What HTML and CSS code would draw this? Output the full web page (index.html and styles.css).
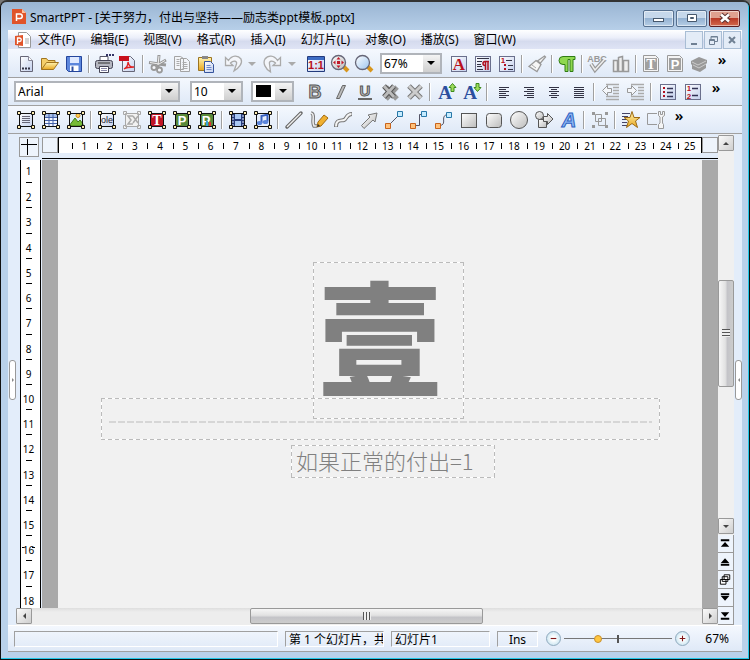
FILE: index.html
```
<!DOCTYPE html>
<html lang="zh-CN">
<head>
    <meta charset="UTF-8">
    <meta name="viewport" content="width=device-width, initial-scale=1.0">
    <title>SmartPPT</title>
    <link rel="stylesheet" href="styles.css">
</head>
<body>
    <!-- Shared icon parts -->
    <svg class="defs" aria-hidden="true">
        <defs>
            <linearGradient id="metal" x1="0" y1="0" x2="1" y2="1"><stop offset="0" stop-color="#fff"/><stop offset="1" stop-color="#bbb"/></linearGradient>
            <linearGradient id="sheet" x1="0" y1="0" x2="1" y2="1"><stop offset="0" stop-color="#fff"/><stop offset="1" stop-color="#c3d0ee"/></linearGradient>
            <linearGradient id="gold" x1="0" y1="0" x2="0" y2="1"><stop offset="0" stop-color="#fff3b0"/><stop offset="1" stop-color="#e9a820"/></linearGradient>
            <linearGradient id="sky" x1="0" y1="0" x2="1" y2="1"><stop offset="0" stop-color="#fff"/><stop offset="1" stop-color="#9cc4ee"/></linearGradient>
            <symbol id="frame" viewBox="0 0 20 20">
                <path d="M3.500 3.500h13v13h-13z" fill="none" stroke="#111"/>
                <path d="M1.500 1.500h3v3h-3zM15.500 1.500h3v3h-3zM1.500 15.500h3v3h-3zM15.500 15.500h3v3h-3z" fill="#ffedb0" stroke="#111"/>
            </symbol>
            <symbol id="page" viewBox="0 0 20 20">
                <rect x="2.500" y="2.500" width="15" height="15" fill="url(#sheet)" stroke="#6a6f8c"/>
            </symbol>
            <symbol id="logo" viewBox="0 0 16 16">
                <path d="M1 1h10l4 4v11H1z" fill="#e0542a"/>
                <path d="M11 1v4h4z" fill="#ffc2a0"/>
                <path d="M5.500 13V6h3.500a2.200 2.200 0 0 1 0 4.500H6" fill="none" stroke="#fff" stroke-width="1.500"/>
            </symbol>
        </defs>
    </svg>

    <div class="window">
        <header class="titlebar">
            <svg class="app-icon" viewBox="0 0 16 16"><use href="#logo"/></svg>
            <h1 class="title">SmartPPT - [关于努力，付出与坚持——励志类ppt模板.pptx]</h1>
            <div class="window-buttons">
                <button class="win-btn" aria-label="最小化"><svg viewBox="0 0 30 16"><rect x="9.500" y="8.500" width="10" height="3" fill="#fff" stroke="#46586d"/></svg></button>
                <button class="win-btn" aria-label="最大化"><svg viewBox="0 0 30 16"><path d="M10.500 4.500h9v7h-9z" fill="#fff" stroke="#46586d"/><path d="M13.500 7.500h3v1h-3z" fill="#9ab5d3" stroke="#46586d"/></svg></button>
                <button class="win-btn close" aria-label="关闭"><svg viewBox="0 0 30 16"><path d="M11 4.500l8 7M19 4.500l-8 7" stroke="#5a3030" stroke-width="4.500"/><path d="M11 4.500l8 7M19 4.500l-8 7" stroke="#fff" stroke-width="2.500"/></svg></button>
            </div>
        </header>

        <nav class="menubar">
            <svg class="doc-icon" viewBox="0 0 16 16"><path d="M3.500.5h8l4 4v11h-12z" fill="#fff" stroke="#999"/><path d="M10 7h4M10 9h4M10 11h4" stroke="#aaa"/><path d="M0 4l8-1v11l-8-1z" fill="#e0542a"/><path d="M2.500 12V6h2a1.500 1.500 0 0 1 0 3.500H3" fill="none" stroke="#fff" stroke-width="1.300"/></svg>
            <button class="menu">文件(F)</button>
            <button class="menu">编辑(E)</button>
            <button class="menu">视图(V)</button>
            <button class="menu">格式(R)</button>
            <button class="menu">插入(I)</button>
            <button class="menu">幻灯片(L)</button>
            <button class="menu">对象(O)</button>
            <button class="menu">播放(S)</button>
            <button class="menu">窗口(W)</button>
            <div class="doc-buttons">
                <button class="doc-btn" aria-label="最小化文档"><svg viewBox="0 0 16 16"><path d="M5 12h6" stroke="#6f8093" stroke-width="2"/></svg></button>
                <button class="doc-btn" aria-label="还原文档"><svg viewBox="0 0 16 16"><path d="M6 7V4.500h6.500v5H10M6 5h6M4.500 7.500h5v5h-5zM4.500 8.500h5" fill="none" stroke="#6f8093"/></svg></button>
                <button class="doc-btn" aria-label="关闭文档"><svg viewBox="0 0 16 16"><path d="M5 5l6 6M11 5l-6 6" stroke="#6f8093" stroke-width="2"/></svg></button>
            </div>
        </nav>

        <div class="toolbar" role="toolbar" aria-label="标准">
            <button class="tool" aria-label="新建"><svg viewBox="0 0 20 20"><path d="M4.500 2.500h8l4 4v11h-12z" fill="url(#sheet)" stroke="#667"/><path d="M12.500 2.500v4h4" fill="#fff" stroke="#889"/><path d="M6 14.500h2M9 14.500h2M12 14.500h2" stroke="#334" stroke-width="2"/></svg></button>
            <button class="tool" aria-label="打开"><svg viewBox="0 0 20 20"><path d="M1.500 15.500v-11h5l1.500 2h7v3" fill="#f5cf6a" stroke="#a07420"/><path d="M1.500 15.500l5-7h12l-5 7z" fill="url(#gold)" stroke="#a07420"/></svg></button>
            <button class="tool" aria-label="保存"><svg viewBox="0 0 20 20"><path d="M2.500 2.500h15v15h-13l-2-2z" fill="#5c86dc" stroke="#24459c"/><path d="M6 3h9v6H6z" fill="#dfe9ff"/><path d="M6 11.500h8.500V17H6z" fill="#fff"/><path d="M7.500 12.500h2V17h-2z" fill="#2c4d9e"/></svg></button>
            <span class="sep"></span>
            <button class="tool" aria-label="打印"><svg viewBox="0 0 20 20"><path d="M6 7V2.500h8V7" fill="#fff" stroke="#556"/><rect x="1.500" y="6.500" width="17" height="8" rx="2" fill="#b4b6c0" stroke="#445"/><path d="M4 9h12" stroke="#333"/><path d="M5.500 12.500h9v6h-9z" fill="#fff" stroke="#445"/><path d="M7 14.500h6M7 16.500h6" stroke="#88a"/><path d="M12 1h2M15 1h2M18 1h2" stroke="#336" stroke-width="2"/></svg></button>
            <button class="tool" aria-label="导出 PDF"><svg viewBox="0 0 20 20"><path d="M4.500 2.500h8l4 4v11h-12z" fill="url(#sheet)" stroke="#667"/><path d="M1 2h10v5H1z" fill="#c8101c"/><path d="M6 15c4-2 4-5 4-7 1 4 2 5 6 5-4 0-7 0-10 2z" fill="none" stroke="#e02020" stroke-width="1.300"/></svg></button>
            <span class="sep"></span>
            <button class="tool" aria-label="剪切" disabled><svg viewBox="0 0 20 20"><path d="M1 8.500l10 1.500 7-4M11 1l-1 12M10 10l8 1" stroke="#999" stroke-width="3" fill="none"/><path d="M2 8.500l9 1.500 6-3.500M11 2l-1 9" stroke="#eee" fill="none"/><circle cx="6" cy="13.500" r="2.500" fill="#f4f6fa" stroke="#999" stroke-width="1.800"/><circle cx="11.500" cy="16" r="2.500" fill="#f4f6fa" stroke="#999" stroke-width="1.800"/></svg></button>
            <button class="tool" aria-label="复制" disabled><svg viewBox="0 0 20 20"><path d="M2.500 2.500h6l3 2v11h-9zM8.500 4.500h6l3 3v10h-9z" fill="#f2f4f8" stroke="#a3a3a3"/><path d="M10.500 8.500h4M10.500 10.500h5M10.500 12.500h5M10.500 14.500h5M4.500 5.500h3M4.500 7.500h3M4.500 9.500h3M4.500 11.500h3" stroke="#aaa"/></svg></button>
            <button class="tool" aria-label="粘贴"><svg viewBox="0 0 20 20"><path d="M2.500 3.500h13v13h-13z" fill="url(#gold)" stroke="#9c7420"/><path d="M6 2h6v3H6z" fill="#888"/><path d="M8.500 7.500h6l3 3v8h-9z" fill="url(#sheet)" stroke="#36549c"/><path d="M10.500 11.500h4M10.500 13.500h5M10.500 15.500h5" stroke="#6d87c8"/></svg></button>
            <button class="tool split" aria-label="撤销" disabled><svg viewBox="0 0 20 20"><path d="M2.500 3.500v8h7.500l-2.500-2.500c3-3 7-2 6 1l-2.500 7c5-3 9-8 7-12-3-4-9-4-12.500 1.500z" fill="#f4f6fa" stroke="#aaa" stroke-width="1.300"/></svg><span class="arrow"></span></button>
            <button class="tool split" aria-label="重做" disabled><svg viewBox="0 0 20 20"><path d="M17.500 3.500v8h-7.500l2.500-2.500c-3-3-7-2-6 1l1 8c-5-3-8-9-5.500-13 3-4 9-4 12.500 1.500z" fill="#f4f6fa" stroke="#aaa" stroke-width="1.300"/></svg><span class="arrow"></span></button>
            <span class="sep blank"></span>
            <button class="tool" aria-label="实际大小"><svg viewBox="0 0 20 20"><path d="M1.500 2.500h17v15h-17z" fill="url(#sheet)" stroke="#223a7c"/><path d="M2 3h16v3H2z" fill="#3d6cc4"/><text class="t-red" x="10" y="15" font-size="11">1:1</text></svg></button>
            <button class="tool" aria-label="整页显示"><svg viewBox="0 0 20 20"><path d="M13 12l5 5" stroke="#d8961c" stroke-width="4"/><circle cx="8.500" cy="8.500" r="7" fill="url(#metal)" stroke="#667" stroke-width="1.300"/><path d="M8.500 3l2 2.500h-4zM8.500 14l2-2.500h-4zM3 8.500l2.500-2v4zM14 8.500l-2.500-2v4zM7 7h3v3H7z" fill="#c01828"/></svg></button>
            <button class="tool" aria-label="缩放"><svg viewBox="0 0 20 20"><path d="M13 12l5 5" stroke="#d8961c" stroke-width="4"/><circle cx="8.500" cy="8.500" r="7" fill="url(#sky)" stroke="#667" stroke-width="1.300"/></svg></button>
            <span class="combo combo-zoom"><select aria-label="显示比例"><option>67%</option><option>100%</option></select></span>
            <button class="tool" aria-label="字符"><svg viewBox="0 0 20 20"><use href="#page"/><text class="t-red t-serif" x="10" y="16" font-size="17">A</text></svg></button>
            <button class="tool" aria-label="段落"><svg viewBox="0 0 20 20"><use href="#page"/><path d="M4 4.500h12M4 7.500h5M4 10.500h4M4 12.500h5M4 15.500h6" stroke="#334"/><path d="M16 7.500h-4a2 2 0 0 0 0 4M12.500 8v8M15 8v8" fill="none" stroke="#b01020" stroke-width="1.500"/></svg></button>
            <button class="tool" aria-label="项目"><svg viewBox="0 0 20 20"><use href="#page"/><text class="t-red" x="6" y="9" font-size="8">1</text><path d="M7 10h2v2H7zM7 14h2v2H7z" fill="#b01020"/><path d="M9 6.500h6M11 11.500h5M11 15.500h5" stroke="#334"/></svg></button>
            <span class="sep"></span>
            <button class="tool" aria-label="格式刷"><svg viewBox="0 0 20 20"><path d="M17.500 2l1 1-5 6-3-2zM9 6.500l5 4-4 7-8-5z" fill="#f6f6f6" stroke="#999" stroke-width="1.300"/><path d="M5 11l4 3" stroke="#aaa"/></svg></button>
            <span class="sep"></span>
            <button class="tool" aria-label="段落标记"><svg viewBox="0 0 20 20"><path d="M6 2.500h12v3h-2v12h-3v-12h-2v12H8v-7H6a4 4 0 0 1 0-8z" fill="#8fd850" stroke="#2f7c14"/></svg></button>
            <span class="sep"></span>
            <button class="tool" aria-label="拼写检查" disabled><svg viewBox="0 0 20 20"><text class="t-gray" x="10" y="8" font-size="9">ABC</text><path d="M4 10l4 6 9-10" fill="none" stroke="#999" stroke-width="4"/><path d="M4 10l4 6 9-10" fill="none" stroke="#eee" stroke-width="1.500"/></svg></button>
            <button class="tool" aria-label="词库" disabled><svg viewBox="0 0 20 20"><path d="M2.500 6.500h4v11h-4zM7.500 3.500l4-1v15h-4zM12.500 6.500h5v11h-5z" fill="#eee" stroke="#999" stroke-width="1.500"/></svg></button>
            <span class="sep"></span>
            <button class="tool" aria-label="文本字段" disabled><svg viewBox="0 0 20 20"><path d="M2.500 1.500h12l3 3v13h-15z" fill="#f4f4f4" stroke="#999"/><path d="M4 4h12v12H4z" fill="#a0a0a0"/><text class="t-white t-serif" x="10" y="15" font-size="14">T</text></svg></button>
            <button class="tool" aria-label="演示字段" disabled><svg viewBox="0 0 20 20"><path d="M2.500 1.500h12l3 3v13h-15z" fill="#f4f4f4" stroke="#999"/><path d="M4 4h12v12H4z" fill="#a0a0a0"/><text class="t-white" x="10" y="15" font-size="13">P</text></svg></button>
            <button class="tool" aria-label="对象库" disabled><svg viewBox="0 0 20 20"><path d="M2 7l8-4 8 3v3l-1 1v4l-6 4-8-3v-4l-1-1z" fill="#999"/><path d="M3 8l6 3 8-4M4 11l6 3 7-4" fill="none" stroke="#ccc"/></svg></button>
            <button class="more" aria-label="更多标准工具">»</button>
        </div>

        <div class="toolbar toolbar-format" role="toolbar" aria-label="格式">
            <span class="combo combo-font"><select aria-label="字体"><option>Arial</option></select></span>
            <span class="combo combo-size"><select aria-label="字号"><option>10</option><option>12</option></select></span>
            <span class="combo combo-color"><select aria-label="字体颜色"><option value="#000000"></option></select></span>
            <button class="tool" aria-label="加粗"><svg viewBox="0 0 20 20"><text class="t-face" x="10" y="16" font-size="18">B</text></svg></button>
            <button class="tool" aria-label="倾斜"><svg viewBox="0 0 20 20"><path d="M12.500 3.500h3l-6 13h-3z" fill="#bbb" stroke="#666"/></svg></button>
            <button class="tool" aria-label="下划线"><svg viewBox="0 0 20 20"><text class="t-face" x="10" y="14" font-size="15">U</text><path d="M3 17h14" stroke="#666" stroke-width="2"/></svg></button>
            <button class="tool" aria-label="阴影"><svg viewBox="0 0 20 20"><path d="M6 5l11 12M17 5L6 17" stroke="#999" stroke-width="5"/><path d="M4 4l10 11M14 4L4 15" stroke="#555" stroke-width="5"/><path d="M4 4l10 11M14 4L4 15" stroke="#bbb" stroke-width="3"/></svg></button>
            <button class="tool" aria-label="清除格式"><svg viewBox="0 0 20 20"><path d="M4 4l12 12M16 4L4 16" stroke="#777" stroke-width="5"/><path d="M4 4l12 12M16 4L4 16" stroke="#ccc" stroke-width="3"/></svg></button>
            <span class="sep"></span>
            <button class="tool" aria-label="增大字号"><svg viewBox="0 0 20 20"><text class="t-blue t-serif" x="8" y="17" font-size="19">A</text><path d="M15.500 1.500l3.500 4h-2v4h-3v-4h-2z" fill="#9fdc5c" stroke="#3d8a1c"/></svg></button>
            <button class="tool" aria-label="减小字号"><svg viewBox="0 0 20 20"><text class="t-blue t-serif" x="8" y="17" font-size="19">A</text><path d="M15.500 9.500l3.500-4h-2v-4h-3v4h-2z" fill="#9fdc5c" stroke="#3d8a1c"/></svg></button>
            <span class="sep"></span>
            <button class="tool" aria-label="左对齐"><svg viewBox="0 0 20 20"><path d="M5 5.500h10M5 7.500h7M5 9.500h10M5 11.500h7M5 13.500h10M5 15.500h7" stroke="#334"/></svg></button>
            <button class="tool" aria-label="右对齐"><svg viewBox="0 0 20 20"><path d="M5 5.500h10M8 7.500h7M5 9.500h10M8 11.500h7M5 13.500h10M8 15.500h7" stroke="#334"/></svg></button>
            <button class="tool" aria-label="居中"><svg viewBox="0 0 20 20"><path d="M5 5.500h10M7 7.500h6M5 9.500h10M7 11.500h6M5 13.500h10M7 15.500h6" stroke="#334"/></svg></button>
            <button class="tool" aria-label="两端对齐"><svg viewBox="0 0 20 20"><path d="M5 5.500h10M5 7.500h10M5 9.500h10M5 11.500h10M5 13.500h10M5 15.500h10" stroke="#334"/></svg></button>
            <span class="sep"></span>
            <button class="tool" aria-label="减少缩进" disabled><svg viewBox="0 0 20 20"><path d="M5 2.500h13M12 5.500h6M12 8.500h6M12 11.500h6M5 14.500h13M5 17.500h13" stroke="#aaa" stroke-width="1.500"/><path d="M1.500 8.500l5-5v3h4v4h-4v3z" fill="#f4f6fa" stroke="#999"/></svg></button>
            <button class="tool" aria-label="增加缩进" disabled><svg viewBox="0 0 20 20"><path d="M5 2.500h13M12 5.500h6M12 8.500h6M12 11.500h6M5 14.500h13M5 17.500h13" stroke="#aaa" stroke-width="1.500"/><path d="M10.500 8.500l-5-5v3h-4v4h4v3z" fill="#f4f6fa" stroke="#999"/></svg></button>
            <span class="sep"></span>
            <button class="tool" aria-label="项目符号"><svg viewBox="0 0 20 20"><use href="#page"/><path d="M5 5h2v2H5zM5 9h2v2H5zM5 13h2v2H5z" fill="#b01020"/><path d="M9 6.500h6M9 10.500h6M9 14.500h6" stroke="#335" stroke-width="1.500"/></svg></button>
            <button class="tool" aria-label="编号"><svg viewBox="0 0 20 20"><use href="#page"/><text class="t-red" x="6" y="9" font-size="8">1</text><text class="t-red" x="6" y="17" font-size="8">2</text><path d="M9 6.500h6M9 13.500h6" stroke="#335" stroke-width="1.500"/></svg></button>
            <button class="more" aria-label="更多格式工具">»</button>
        </div>

        <div class="toolbar toolbar-object" role="toolbar" aria-label="对象">
            <button class="tool" aria-label="文本框"><svg viewBox="0 0 20 20"><rect x="3" y="3" width="14" height="14" fill="url(#sheet)"/><path d="M6 6.500h8M6 8.500h8M6 10.500h8M6 12.500h8" stroke="#667"/><use href="#frame"/></svg></button>
            <button class="tool" aria-label="表格"><svg viewBox="0 0 20 20"><rect x="3" y="3" width="14" height="14" fill="#f2f6ff"/><path d="M4 4h12v3H4z" fill="#a8bfe8"/><path d="M4 7.500h12M4 10.500h12M4 13.500h12M8 4v12M12 4v12" stroke="#4562a8"/><use href="#frame"/></svg></button>
            <button class="tool" aria-label="图片"><svg viewBox="0 0 20 20"><rect x="3" y="3" width="14" height="14" fill="#dff0fb"/><path d="M3 16l6-8 3 4 2-2 3 4v2z" fill="#76bb38" stroke="#3c7c18"/><circle cx="12" cy="5.500" r="2" fill="#ffd050" stroke="#d08a20"/><use href="#frame"/></svg></button>
            <span class="sep"></span>
            <button class="tool" aria-label="OLE 对象"><svg viewBox="0 0 20 20"><rect x="3" y="3" width="14" height="14" fill="url(#sheet)"/><text class="t-dark" x="10" y="13" font-size="9">ole</text><use href="#frame"/></svg></button>
            <button class="tool" aria-label="公式" disabled><svg viewBox="0 0 20 20"><path d="M3.500 3.500h13v13h-13zM1.500 1.500h3v3h-3zM15.500 1.500h3v3h-3zM1.500 15.500h3v3h-3zM15.500 15.500h3v3h-3z" fill="#f2f2f2" stroke="#a8a8a8"/><path d="M11 6H6l3 4-3 4h5M11 6l5 7M16 6l-5 7" fill="none" stroke="#aaa" stroke-width="1.500"/></svg></button>
            <button class="tool" aria-label="TextMaker 对象"><svg viewBox="0 0 20 20"><rect x="3" y="3" width="14" height="14" fill="#c01424"/><text class="t-white t-serif" x="10" y="15" font-size="14">T</text><use href="#frame"/></svg></button>
            <button class="tool" aria-label="PlanMaker 对象"><svg viewBox="0 0 20 20"><rect x="3" y="3" width="14" height="14" fill="#5a8a3a"/><text class="t-white" x="10" y="15" font-size="13">P</text><use href="#frame"/></svg></button>
            <button class="tool" aria-label="图表"><svg viewBox="0 0 20 20"><rect x="3" y="3" width="14" height="14" fill="#5a8a3a"/><text class="t-white" x="9" y="15" font-size="13">P</text><path d="M9 11h2v5H9z" fill="#38a0e0"/><path d="M12 12h2v4h-2z" fill="#e03030"/><use href="#frame"/></svg></button>
            <span class="sep"></span>
            <button class="tool" aria-label="影片"><svg viewBox="0 0 20 20"><rect x="3" y="3" width="14" height="14" fill="#263a78"/><path d="M7 4h6v5H7zM7 11h6v5H7z" fill="#a9c8f4"/><path d="M5 5v11M15 5v11" stroke="#dfe8ff" stroke-dasharray="2 1"/><use href="#frame"/></svg></button>
            <button class="tool" aria-label="声音"><svg viewBox="0 0 20 20"><rect x="3" y="3" width="14" height="14" fill="#e6eefc"/><path d="M8.500 13V6l6-1.500v7" fill="none" stroke="#3860c0" stroke-width="2"/><ellipse cx="6.500" cy="13" rx="2.800" ry="2" fill="#5a85dc"/><ellipse cx="12.500" cy="12" rx="2.800" ry="2" fill="#5a85dc"/><use href="#frame"/></svg></button>
            <span class="sep"></span>
            <button class="tool" aria-label="直线"><svg viewBox="0 0 20 20"><path d="M3 17L17 3" stroke="#666" stroke-width="3.500" stroke-linecap="round"/><path d="M3 17L17 3" stroke="#eee" stroke-width="1.500"/></svg></button>
            <button class="tool" aria-label="手绘"><svg viewBox="0 0 20 20"><path d="M2 3c5 1 0 8 3 13h3" fill="none" stroke="#777" stroke-width="3.500"/><path d="M2 3c5 1 0 8 3 13h3" fill="none" stroke="#eee" stroke-width="1.500"/><path d="M8 17l1-5 6-7 4 3-7 8z" fill="#f0b030" stroke="#a06a10"/><path d="M8 17l1-3 2 2z" fill="#333"/></svg></button>
            <button class="tool" aria-label="曲线"><svg viewBox="0 0 20 20"><path d="M2 17c0-8 5-6 8-7s2-6 8-6" fill="none" stroke="#777" stroke-width="4"/><path d="M2 16.500c0-7.500 5-5.500 8-6.500s2-6 7.500-6" fill="none" stroke="#f4f4f4" stroke-width="2"/></svg></button>
            <button class="tool" aria-label="箭头"><svg viewBox="0 0 20 20"><path d="M2.500 15.500l8.500-8.500-2-2 9-2-2 9-2-2-9 8.500z" fill="url(#metal)" stroke="#777"/></svg></button>
            <button class="tool" aria-label="直线连接符"><svg viewBox="0 0 20 20"><path d="M5 15L15 5" stroke="#556"/><path d="M1.500 13.500h5v5h-5z" fill="#ffc27c" stroke="#c8641c"/><path d="M13.500 1.500h5v5h-5z" fill="#c6ecff" stroke="#2878a8"/></svg></button>
            <button class="tool" aria-label="折线连接符"><svg viewBox="0 0 20 20"><path d="M5 15.500h5.500v-11H15" fill="none" stroke="#556"/><path d="M1.500 13.500h5v5h-5z" fill="#ffc27c" stroke="#c8641c"/><path d="M12.500 1.500h5v5h-5z" fill="#c6ecff" stroke="#2878a8"/></svg></button>
            <button class="tool" aria-label="曲线连接符"><svg viewBox="0 0 20 20"><path d="M5 15.500c10 0-1-11 10-11" fill="none" stroke="#556"/><path d="M1.500 13.500h5v5h-5z" fill="#ffc27c" stroke="#c8641c"/><path d="M12.500 2.500h5v5h-5z" fill="#c6ecff" stroke="#2878a8"/></svg></button>
            <button class="tool" aria-label="矩形"><svg viewBox="0 0 20 20"><rect x="2.500" y="3.500" width="15" height="14" fill="url(#metal)" stroke="#555"/></svg></button>
            <button class="tool" aria-label="圆角矩形"><svg viewBox="0 0 20 20"><rect x="2.500" y="3.500" width="15" height="14" rx="3" fill="url(#metal)" stroke="#555"/></svg></button>
            <button class="tool" aria-label="椭圆"><svg viewBox="0 0 20 20"><circle cx="10" cy="10" r="8.500" fill="url(#metal)" stroke="#555"/></svg></button>
            <button class="tool" aria-label="自选图形"><svg viewBox="0 0 20 20"><path d="M4.500 9.500h8v8h-8z" fill="url(#metal)" stroke="#555"/><circle cx="5.500" cy="5.500" r="4" fill="url(#metal)" stroke="#555"/><path d="M9.500 6.500h4v-3l5.500 5.500-5.500 5.500v-3h-4z" fill="url(#metal)" stroke="#555"/></svg></button>
            <button class="tool" aria-label="艺术字"><svg viewBox="0 0 20 20"><text class="t-art" x="10" y="17" font-size="20">A</text></svg></button>
            <span class="sep"></span>
            <button class="tool" aria-label="组合" disabled><svg viewBox="0 0 20 20"><path d="M5.500 4.500h6v7h-6zM8.500 8.500h7v7h-7z" fill="none" stroke="#999"/><path d="M2 2h3v3H2zM15 2h3v3h-3zM2 15h3v3H2zM15 15h3v3h-3z" fill="#999"/></svg></button>
            <span class="sep"></span>
            <button class="tool" aria-label="动画"><svg viewBox="0 0 20 20"><path d="M1 3.500h8M1 6.500h6M1 9.500h5M1 12.500h5M1 15.500h5" stroke="#446"/><path d="M11 1.500l2 6h6l-4.500 3.500 2 6.500-5.500-4-5.500 4 2-6.500L3 7.500h6z" fill="url(#gold)" stroke="#9c6a14"/></svg></button>
            <button class="tool" aria-label="对象属性" disabled><svg viewBox="0 0 20 20"><path d="M11 3.500H1.500v11H11" fill="none" stroke="#999"/><path d="M12.500 1.500v4l1.500 1.500v6l-1.500 1.500v4h5v-4L16.500 13V7L18.500 5.500v-4l-2 0v3h-2v-3z" fill="#f4f4f4" stroke="#999"/></svg></button>
            <button class="more" aria-label="更多对象工具">»</button>
        </div>

        <main class="workspace">
            <button class="splitter splitter-left" aria-label="显示左侧面板"></button>
            <button class="origin" aria-label="标尺原点"></button>
            <div class="ruler-top">
                <span class="ruler-end"></span>
                <div class="ruler-scale">
                    <span>1</span><span>2</span><span>3</span><span>4</span><span>5</span>
                    <span>6</span><span>7</span><span>8</span><span>9</span><span>10</span>
                    <span>11</span><span>12</span><span>13</span><span>14</span><span>15</span>
                    <span>16</span><span>17</span><span>18</span><span>19</span><span>20</span>
                    <span>21</span><span>22</span><span>23</span><span>24</span><span>25</span>
                </div>
                <span class="ruler-end"></span>
            </div>
            <div class="ruler-left">
                <span>1</span><span>2</span><span>3</span><span>4</span><span>5</span><span>6</span>
                <span>7</span><span>8</span><span>9</span><span>10</span><span>11</span><span>12</span>
                <span>13</span><span>14</span><span>15</span><span class="pointer">16</span><span>17</span><span>18</span>
            </div>
            <div class="canvas">
                <div class="slide">
                    <div class="object object-title">壹</div>
                    <div class="object object-rule"><div class="rule"></div></div>
                    <div class="object object-text">如果正常的付出=1</div>
                </div>
            </div>
            <div class="hscroll">
                <button class="scroll-btn" aria-label="向左滚动"><span class="tri left"></span></button>
                <div class="track">
                    <div class="thumb"></div>
                </div>
                <button class="scroll-btn" aria-label="向右滚动"><span class="tri right"></span></button>
            </div>
            <div class="vscroll">
                <button class="scroll-btn" aria-label="向上滚动"><span class="tri up"></span></button>
                <div class="track">
                    <div class="thumb"></div>
                </div>
                <button class="scroll-btn" aria-label="向下滚动"><span class="tri down"></span></button>
                <div class="slide-nav">
                    <button aria-label="第一张"><svg viewBox="0 0 16 17"><path d="M3 4h9v2H3zM7.500 7l4.500 5H3z"/></svg></button>
                    <button aria-label="上一张"><svg viewBox="0 0 16 17"><path d="M7.500 5l4.500 5H3zM3 11h9v2H3z"/></svg></button>
                    <button aria-label="选择视图"><svg viewBox="0 0 16 17"><path d="M6.500 3.500h6v5h-6zM4.500 5.500h6v5h-6zM2.500 8.500h6v5h-6z" fill="#fff" stroke="#000"/></svg></button>
                    <button aria-label="下一张"><svg viewBox="0 0 16 17"><path d="M3 4h9v2H3zM3 7h9l-4.500 5z"/></svg></button>
                    <button aria-label="最后一张"><svg viewBox="0 0 16 17"><path d="M3 5h9l-4.500 5zM3 11h9v2H3z"/></svg></button>
                </div>
            </div>
            <button class="splitter splitter-right" aria-label="显示右侧面板"></button>
        </main>

        <footer class="statusbar">
            <span class="field field-message"></span>
            <span class="field field-count">第 1 个幻灯片，共</span>
            <span class="field field-name">幻灯片1</span>
            <span class="field field-mode">Ins</span>
            <div class="zoom">
                <button class="zoom-btn" aria-label="缩小"><svg viewBox="0 0 14 14"><path d="M4 7h6" stroke="#801818" stroke-width="1.200"/></svg></button>
                <input class="zoom-slider" type="range" min="0" max="100" value="30" aria-label="缩放">
                <button class="zoom-btn" aria-label="放大"><svg viewBox="0 0 14 14"><path d="M4 7h6M7 4v6" stroke="#801818" stroke-width="1.200"/></svg></button>
            </div>
            <span class="zoom-value">67%</span>
        </footer>
    </div>
</body>
</html>
```

FILE: styles.css
```
* {
    box-sizing: border-box;
}
body {
    margin: 0;
    background: #777;
    color: #000;
    font-family: "Noto Sans", "Noto Sans CJK SC", sans-serif;
    font-size: 12px;
}
button,
select {
    font: inherit;
    color: inherit;
}
button {
    display: flex;
    align-items: center;
    justify-content: center;
    margin: 0;
    padding: 0;
    border: none;
    background: none;
}
.defs {
    position: absolute;
    width: 0;
    height: 0;
}

/* Window frame */
.window {
    display: flex;
    flex-direction: column;
    min-height: 100vh;
    padding: 0 7px 7px;
    border: 1px solid #111;
    border-top: 2px solid #333;
    border-radius: 7px 7px 0 0;
    background: linear-gradient(#9ab5d3, #b9d1ea 30px);
    box-shadow: inset -1px -1px 0 #22c8e8;
}
.titlebar {
    display: flex;
    align-items: center;
    height: 28px;
    padding-left: 3px;
}
.app-icon {
    width: 16px;
    height: 16px;
    margin-right: 3px;
}
.title {
    flex: 1;
    margin: 0;
    padding-top: 4px;
    overflow: hidden;
    font-size: 12px;
    font-weight: normal;
    line-height: 18px;
    white-space: nowrap;
}
.window-buttons {
    display: flex;
    gap: 2px;
    padding: 4px 2px 0 0;
}
.win-btn {
    width: 31px;
    height: 17px;
    border: 1px solid #56708f;
    border-radius: 2px;
    background: linear-gradient(#c6d8eb 45%, #94b2d2 50%, #b6cee6);
    box-shadow: inset 0 0 0 1px rgba(255, 255, 255, 0.5);
}
.win-btn svg {
    flex: none;
    width: 30px;
    height: 16px;
}
.win-btn.close {
    border-color: #5c1c20;
    background: linear-gradient(#dfa08f 45%, #b93a27 50%, #d3694d);
}

/* Menu */
.menubar {
    display: flex;
    align-items: center;
    height: 20px;
    padding-left: 7px;
    border-bottom: 1px solid #f6f9fd;
    background: linear-gradient(#fff, #eceffa 40%, #d5dbee 60%, #dfe4f5);
}
.doc-icon {
    width: 16px;
    height: 16px;
}
.menu {
    padding: 0 8px 0 7px;
    line-height: 18px;
    white-space: nowrap;
}
.doc-buttons {
    display: flex;
    gap: 1px;
    margin-left: auto;
    padding-right: 1px;
}
.doc-btn {
    width: 18px;
    height: 18px;
    border: 1px solid #a8bdd4;
    background: #e3ecf7;
}
.doc-btn svg {
    width: 16px;
    height: 16px;
}

/* Toolbars */
.toolbar {
    display: flex;
    align-items: center;
    height: 28px;
    padding-left: 6px;
    border-bottom: 1px solid #a0a0a0;
    background: linear-gradient(#f4f8fe, #dfe9f7);
}
.toolbar-object {
    padding-left: 5px;
}
.tool {
    flex: none;
    width: 24px;
    height: 24px;
}
.toolbar-format .tool,
.toolbar-object .tool {
    width: 25px;
}
.tool svg {
    flex: none;
    width: 20px;
    height: 20px;
    overflow: visible;
}
.toolbar .tool.split {
    width: 40px;
    gap: 5px;
    padding-left: 3px;
}
.arrow {
    border: 4px solid transparent;
    border-top-color: #aaa;
    border-bottom: none;
}
.sep {
    flex: none;
    width: 2px;
    height: 18px;
    margin: 0 2px;
    border-left: 1px solid #a0a0a0;
    border-right: 1px solid #fff;
}
.toolbar-format .sep {
    margin: 0 3px 0 2px;
}
.sep.blank {
    border-color: transparent;
}
.more {
    align-self: flex-start;
    width: 22px;
    font-size: 15px;
    font-weight: 600;
    line-height: 18px;
}
.combo {
    position: relative;
    display: flex;
    height: 21px;
    border: 2px solid #b0b4ba;
    background: #fff;
}
.combo select {
    flex: 1;
    min-width: 0;
    padding: 0 18px 0 2px;
    border: none;
    border-radius: 0;
    background: linear-gradient(#f4f4f4, #cfcfcf) right / 17px 100% no-repeat;
    appearance: none;
}
.combo::after {
    content: "";
    position: absolute;
    top: 6px;
    right: 5px;
    border: 4px solid transparent;
    border-top-color: #000;
    border-bottom: none;
    pointer-events: none;
}
.combo-zoom {
    width: 62px;
    margin: 0 5px 0 4px;
}
.combo-font {
    width: 166px;
    margin-right: 10px;
}
.combo-size {
    width: 53px;
    margin-right: 8px;
}
.combo-color {
    width: 43px;
    margin-right: 8px;
}
.combo.combo-color select {
    background:
        linear-gradient(#000, #000) 3px 2px / 15px 12px no-repeat,
        linear-gradient(#f4f4f4, #cfcfcf) right / 17px 100% no-repeat;
}

/* Letters inside icons */
svg text {
    font-family: "Liberation Sans", sans-serif;
    font-weight: bold;
    text-anchor: middle;
}
svg .t-serif {
    font-family: "Liberation Serif", serif;
}
.t-red {
    fill: #b81020;
}
.t-white {
    fill: #fff;
}
.t-gray {
    fill: #999;
}
.t-blue {
    fill: #2c4f9e;
}
svg .t-dark {
    fill: #223;
    font-weight: normal;
}
.t-face {
    fill: #bbb;
    stroke: #555;
}
.t-art {
    fill: #8fb8f4;
    stroke: #2c60c0;
    font-style: italic;
}

/* Workspace */
.workspace {
    flex: 1;
    display: grid;
    grid-template-columns: 8px 26px 1fr 16px 8px;
    grid-template-rows: 26px 1fr 17px;
    min-height: 300px;
    background: #e3edfa;
}
.splitter {
    grid-row: 1 / 4;
    align-self: center;
    width: 7px;
    height: 40px;
    border: 1px solid #999;
    border-radius: 3px;
    background: #fff;
}
.splitter::after {
    content: "";
    border: 2px solid transparent;
    border-left-color: #888;
    border-right: none;
}
.splitter-left {
    grid-column: 1;
    justify-self: end;
}
.splitter-right {
    grid-column: 5;
    justify-self: end;
}
.splitter-right::after {
    transform: rotate(180deg);
}
.origin {
    grid-column: 2;
    grid-row: 1;
    width: 20px;
    height: 20px;
    margin: 3px;
    border: 1px solid #999;
    background:
        linear-gradient(#000, #000) 7px 1px / 1px 16px no-repeat,
        linear-gradient(#000, #000) 1px 6px / 16px 1px no-repeat,
        #eef4fc;
}
.ruler-top {
    grid-column: 3;
    grid-row: 1;
    display: flex;
    height: 25px;
    padding: 3px 0 5px;
    border-bottom: 1px solid #000;
}
.ruler-end {
    width: 16px;
    height: 16px;
    border: 1px solid #999;
    background: #eef4fc;
}
.ruler-scale {
    flex: 1;
    display: flex;
    border: 1px solid #000;
    border-bottom: none;
    background: #fff;
    font-size: 10px;
    line-height: 16px;
}
.ruler-scale::before {
    content: "";
    flex: 5;
}
.ruler-scale span {
    flex: 10 1 0;
    display: flex;
    align-items: center;
    justify-content: center;
    min-width: 0;
}
.ruler-scale span:last-child {
    flex-grow: 9;
}
.ruler-scale span::before {
    content: "";
    width: 1px;
    height: 6px;
    margin-right: auto;
    background: #000;
}
.ruler-scale span::after {
    content: "";
    width: 1px;
    margin-left: auto;
}
.ruler-left {
    grid-column: 2;
    grid-row: 2;
    display: flex;
    flex-direction: column;
    margin: 0 1px 0 4px;
    border-left: 1px solid #000;
    border-right: 1px solid #000;
    background: #fff;
    font-size: 10px;
    line-height: 12px;
}
.ruler-left span {
    flex: 25 1 0;
    display: flex;
    flex-direction: column;
    align-items: center;
    gap: 8px;
    min-height: 0;
    padding-right: 4px;
}
.ruler-left span::before {
    content: "";
    width: 6px;
    height: 1px;
    background: #000;
}
.ruler-left span:first-child,
.ruler-left span:last-child {
    flex-grow: 22;
}
.ruler-left span:first-child {
    gap: 4px;
}
.ruler-left span:first-child::before {
    background: none;
}
.ruler-left .pointer {
    background: linear-gradient(90deg, #000 2px, transparent 2px 10px, #000 10px) 1px 12px / 13px 1px no-repeat;
}
.canvas {
    grid-column: 3;
    grid-row: 2;
    display: flex;
    padding: 0 16px;
    background: #a9a9a9;
}
.slide {
    position: relative;
    flex: 1;
    overflow: hidden;
    background: #f1f1f1;
    color: #808080;
}
.object {
    position: absolute;
    display: flex;
    align-items: flex-start;
    background:
        repeating-linear-gradient(90deg, #bbb 0 4px, #fff 4px 7px) top / 100% 1px no-repeat,
        repeating-linear-gradient(90deg, #bbb 0 4px, #fff 4px 7px) bottom / 100% 1px no-repeat,
        repeating-linear-gradient(#bbb 0 4px, #fff 4px 7px) left / 1px 100% no-repeat,
        repeating-linear-gradient(#bbb 0 4px, #fff 4px 7px) right / 1px 100% no-repeat;
    white-space: nowrap;
}
.object-title {
    top: 102px;
    left: 255px;
    width: 151px;
    height: 157px;
    padding: 0 5px;
    font-family: "Noto Sans CJK SC", sans-serif;
    font-size: 124px;
    font-weight: 900;
    line-height: 142px;
}
.object-rule {
    top: 238px;
    left: 43px;
    width: 559px;
    height: 42px;
    padding: 0 8px;
}
.rule {
    flex: 1;
    height: 2px;
    margin-top: 23px;
    background: repeating-linear-gradient(90deg, #d6d6d6 0 7px, transparent 7px 9px);
}
.object-text {
    top: 285px;
    left: 233px;
    width: 204px;
    height: 33px;
    padding: 0 5px;
    font-family: "Noto Sans CJK SC", sans-serif;
    font-size: 22px;
    font-weight: 300;
    line-height: 30px;
}

/* Scroll bars */
.hscroll {
    grid-column: 2 / 4;
    grid-row: 3;
    display: flex;
    background: linear-gradient(#dedede, #ededed 4px);
}
.vscroll {
    grid-column: 4;
    grid-row: 1 / 4;
    display: flex;
    flex-direction: column;
    padding-top: 1px;
    background: #f0f0f0;
}
.scroll-btn {
    flex: none;
    width: 16px;
    height: 16px;
    border: 1px solid #999;
    border-radius: 1px;
    background: linear-gradient(135deg, #fafafa, #cfcfcf);
}
.track {
    flex: 1;
    display: flex;
}
.thumb {
    display: flex;
    align-items: center;
    justify-content: center;
    border: 1px solid #999;
    border-radius: 2px;
}
.thumb::after {
    content: "";
    width: 8px;
    height: 8px;
}
.hscroll .thumb {
    flex: 231;
    height: 16px;
    background: linear-gradient(#f6f6f6, #e2e2e2 45%, #c4c4c8 60%, #ccc);
}
.hscroll .thumb::after {
    background: repeating-linear-gradient(90deg, #555 0 1px, #eee 1px 3px);
}
.hscroll .track::before {
    content: "";
    flex: 219;
}
.hscroll .track::after {
    content: "";
    flex: 220;
}
.vscroll .track {
    flex-direction: column;
}
.vscroll .thumb {
    flex: 106;
    background: linear-gradient(90deg, #f6f6f6, #e2e2e2 45%, #c4c4c8 60%, #ccc);
}
.vscroll .thumb::after {
    background: repeating-linear-gradient(#555 0 1px, #eee 1px 3px);
}
.vscroll .track::before {
    content: "";
    flex: 129;
}
.vscroll .track::after {
    content: "";
    flex: 131;
}
.tri {
    border: 3px solid transparent;
}
.tri.up {
    border-top: none;
    border-bottom-color: #444;
}
.tri.down {
    border-bottom: none;
    border-top-color: #444;
}
.tri.left {
    border-left: none;
    border-right-color: #444;
}
.tri.right {
    border-right: none;
    border-left-color: #444;
}
.slide-nav {
    padding-top: 1px;
}
.slide-nav button {
    width: 16px;
    height: 18px;
    border-right: 1px solid #999;
    border-bottom: 1px solid #999;
    background: #eef4fc;
}
.slide-nav svg {
    width: 16px;
    height: 17px;
}

/* Status bar */
.statusbar {
    display: flex;
    align-items: center;
    height: 27px;
    padding: 0 13px 0 6px;
    border-top: 1px solid #fff;
    border-bottom: 1px solid #a0a0a0;
    background: linear-gradient(#f4f8fe, #dfe9f7);
}
.field {
    height: 16px;
    margin-right: 7px;
    padding: 0 3px;
    overflow: hidden;
    border: 1px solid #a0a0a0;
    border-right-color: #fff;
    border-bottom-color: #fff;
    line-height: 16px;
    white-space: nowrap;
}
.field-message {
    flex: 1;
}
.field-count,
.field-name {
    width: 99px;
}
.field-mode {
    width: 41px;
    text-align: center;
}
.zoom {
    display: flex;
    align-items: center;
    margin-left: 1px;
}
.zoom-btn {
    width: 15px;
    height: 15px;
    border: 1px solid #8fa9bd;
    border-radius: 50%;
    background: radial-gradient(#fff 20%, #b8dcec);
}
.zoom-btn svg {
    flex: none;
    width: 13px;
    height: 13px;
}
.zoom-slider {
    width: 108px;
    height: 14px;
    margin: 0 3px;
    background:
        linear-gradient(#555, #555) 53px center / 2px 8px no-repeat,
        linear-gradient(#777, #777) center / 100% 1px no-repeat;
    appearance: none;
}
.zoom-slider::-webkit-slider-thumb {
    width: 8px;
    height: 8px;
    border: 1px solid #c89030;
    border-radius: 50%;
    background: #ffc640;
    appearance: none;
}
.zoom-value {
    width: 39px;
    text-align: right;
}
```
